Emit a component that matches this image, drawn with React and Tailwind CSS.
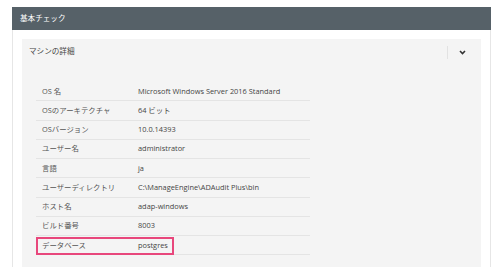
export default function App() {
  const rows = [
    ["OS 名", "Microsoft Windows Server 2016 Standard"],
    ["OSのアーキテクチャ", "64 ビット"],
    ["OSバージョン", "10.0.14393"],
    ["ユーザー名", "administrator"],
    ["言語", "ja"],
    ["ユーザーディレクトリ", "C:\\ManageEngine\\ADAudit Plus\\bin"],
    ["ホスト名", "adap-windows"],
    ["ビルド番号", "8003"],
    ["データベース", "postgres"],
  ];
  return (
    <div
      className="w-[500px] h-[267px] bg-white overflow-hidden pt-[7px] pl-[12px] pr-[9px]"
      style={{ fontFamily: '"Open Sans", "Noto Sans CJK JP", sans-serif' }}
    >
      <div className="h-[23px] bg-[#566168] flex items-center pl-[8px] text-white text-[7.6px]">
        基本チェック
      </div>
      <div className="border-x border-[#e6e6e6] h-[300px] pt-[9px] pl-[9px] pr-[9px]">
        <div className="bg-[#f4f4f4] h-[300px]">
          <div className="h-[26px] flex items-center pl-[7px] text-[7.6px] text-[#444]">
            <span className="flex-1">マシンの詳細</span>
            <div className="w-px h-[13px] bg-[#e2e2e2]" />
            <div className="w-[29px] flex items-center justify-center">
              <svg width="7" height="5" viewBox="0 0 7 5">
                <path d="M1 1 L3.5 3.5 L6 1" stroke="#333" strokeWidth="1.6" fill="none" />
              </svg>
            </div>
            <div className="w-[4px]" />
          </div>
          <div className="relative ml-[14px] mt-[17px] w-[274px]">
            {rows.map(([k, v]) => (
              <div
                key={k}
                className="h-[19.25px] flex items-center border-b border-[#e4e4e4] text-[7.4px]"
              >
                <span className="w-[102px] pl-[6px] text-[#555]">{k}</span>
                <span className="text-[#444]">{v}</span>
              </div>
            ))}
            <div className="absolute left-0 top-[155px] w-[138px] h-[18px] border-2 border-[#e8477c]" />
          </div>
        </div>
      </div>
    </div>
  );
}
